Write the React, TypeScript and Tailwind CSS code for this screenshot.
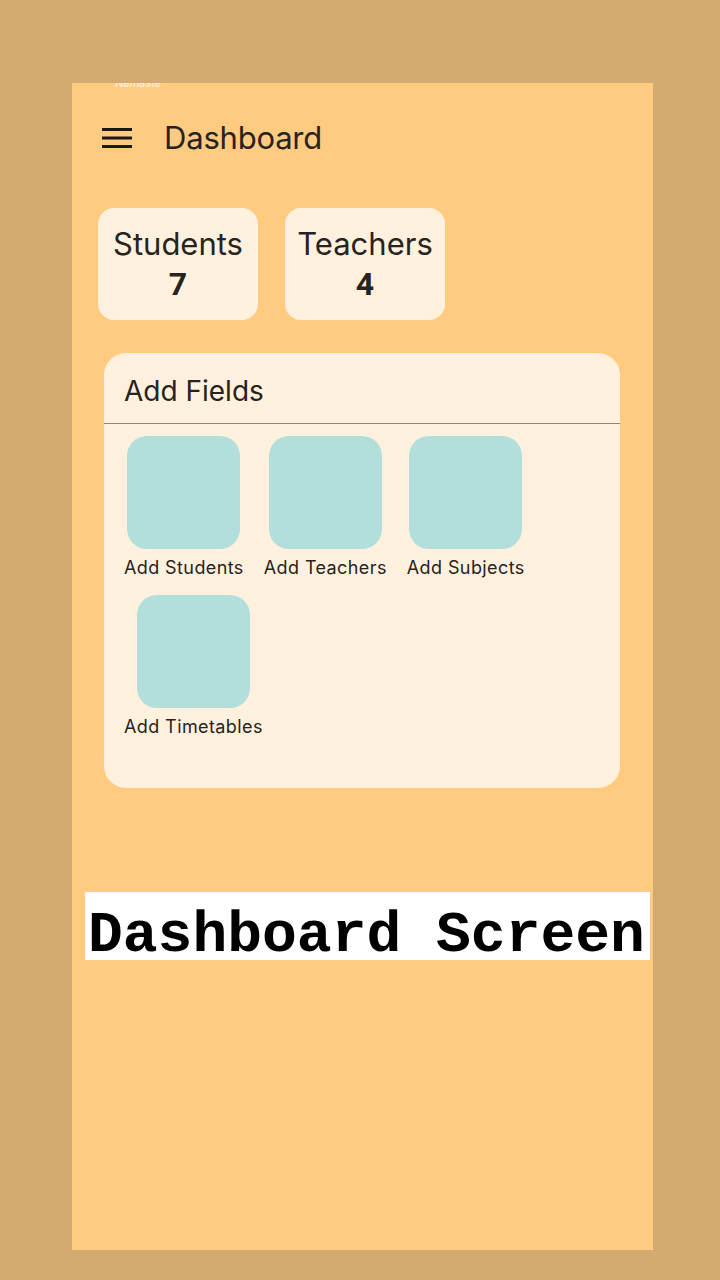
import React from 'react';

const stats = [
  { label: 'Students', value: 7 },
  { label: 'Teachers', value: 4 },
];

const fields = ['Add Students', 'Add Teachers', 'Add Subjects', 'Add Timetables'];

const font = { fontFamily: 'Inter, "Noto Sans", sans-serif' };

function MenuIcon() {
  return (
    <svg width="30" height="20" viewBox="0 0 30 20" className="block">
      <rect x="0" y="0" width="30" height="3" fill="#1c1a18" />
      <rect x="0" y="8.5" width="30" height="3" fill="#1c1a18" />
      <rect x="0" y="17" width="30" height="3" fill="#1c1a18" />
    </svg>
  );
}

export default function App() {
  return (
    <div className="min-h-screen w-full bg-[#d3aa6f] pt-[83px] pb-[30px]" style={font}>
      <div className="ml-[72px] w-[581px] h-[1167px] bg-[#ffcb80] relative overflow-hidden flex flex-col text-[#262320]">
        {/* status text clipped at top */}
        <span className="absolute top-[-7px] left-[43px] text-[11px] leading-[14px] text-white/80">Namaste</span>

        {/* Top bar */}
        <header className="flex items-center h-[56px] mt-[27px] pl-[30px] gap-[32px]">
          <MenuIcon />
          <h1 className="text-[31px] leading-[40px] font-normal tracking-[-0.2px]">Dashboard</h1>
        </header>

        {/* Stat cards */}
        <div className="flex gap-[27px] ml-[26px] mt-[42px]">
          {stats.map((s) => (
            <div
              key={s.label}
              className="w-[160px] h-[112px] rounded-[16px] bg-[#fff1de] flex flex-col items-center justify-center"
            >
              <span className="text-[31px] leading-[36px]">{s.label}</span>
              <span
                className="block mt-[4px] text-[32px] leading-[36px] font-bold"
                style={{ fontFamily: 'Roboto, sans-serif' }}
              >
                {s.value}
              </span>
            </div>
          ))}
        </div>

        {/* Add Fields card */}
        <div className="ml-[32px] mt-[33px] w-[516px] h-[435px] rounded-[22px] bg-[#fff1de] flex flex-col">
          <div className="h-[70px] flex items-center pl-[20px] pt-[6px]">
            <h2 className="text-[28px] leading-[34px] font-normal">Add Fields</h2>
          </div>
          <div className="h-px bg-[#8c857d]" />
          <div className="flex flex-wrap gap-x-[20px] gap-y-[15px] pl-[20px] pt-[12px]">
            {fields.map((f) => (
              <div key={f} className="flex flex-col items-center">
                <div className="w-[113px] h-[113px] rounded-[20px] bg-[#b2dedc]" />
                <span className="mt-[7px] text-[18px] leading-[24px] tracking-[0.4px]">{f}</span>
              </div>
            ))}
          </div>
        </div>

        {/* Caption */}
        <div className="ml-[13px] mt-[104px] w-[565px] h-[68px] bg-white flex items-center pl-[3px] pt-[20px]">
          <span
            className="text-[58px] leading-[48px] font-bold text-black whitespace-nowrap"
            style={{ fontFamily: '"Liberation Mono", monospace' }}
          >
            Dashboard Screen
          </span>
        </div>
      </div>
    </div>
  );
}
